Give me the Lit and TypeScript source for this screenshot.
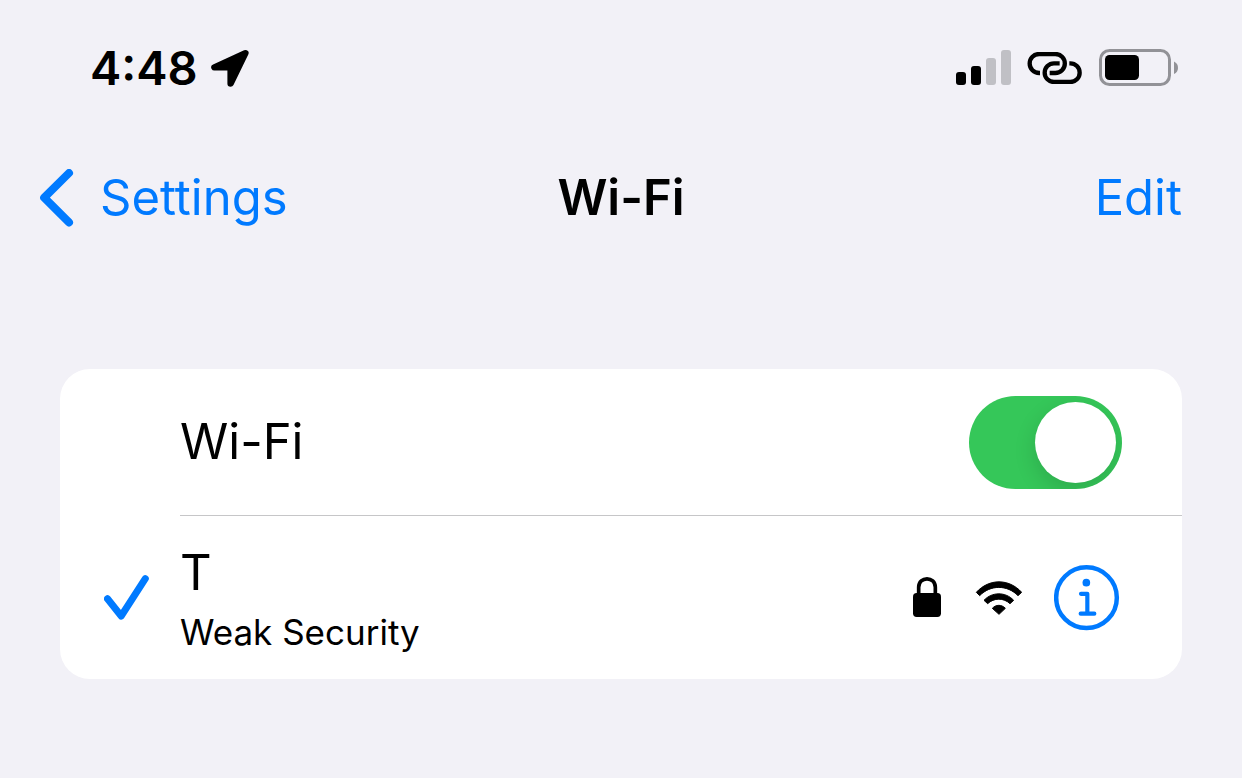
import { LitElement, css, html } from "lit";
import { customElement, state } from "lit/decorators.js";

@customElement("status-bar")
class StatusBar extends LitElement {
  static styles = css`
    :host {
      display: flex;
      align-items: center;
      justify-content: space-between;
      height: 136px;
      padding: 0 64px 0 90px;
    }
    .group {
      display: flex;
      align-items: center;
      gap: 16px;
    }
    .clock {
      display: flex;
      align-items: center;
      gap: 13px;
      font-size: 47px;
      line-height: 60px;
      font-weight: 600;
    }
    svg {
      display: block;
    }
  `;

  render() {
    return html`
      <div class="clock">
        <time>4:48</time>
        <svg width="38" height="38" viewBox="0 0 38 38" aria-hidden="true">
          <path d="M34.4 4.2 3.4 18.400H19.6V34.600Z" stroke="#000" stroke-width="6.4" stroke-linejoin="round" />
        </svg>
      </div>
      <div class="group">
        <svg width="55" height="36" viewBox="0 0 55 36" role="img" aria-label="Signal">
          <rect x="0" y="22" width="10" height="13" rx="3" />
          <rect x="15" y="16" width="10" height="19" rx="3" />
          <rect x="30" y="8" width="10" height="27" rx="3" fill="#c0c0c5" />
          <rect x="45" y="0" width="10" height="35" rx="3" fill="#c0c0c5" />
        </svg>
        <svg width="55" height="32" viewBox="262 51 165 96" role="img" aria-label="Hotspot">
          <g fill="none" stroke="#000" stroke-width="13">
            <path d="M301 114H298.500A28.500 28.500 0 0 1 298.500 57H347A28.500 28.500 0 0 1 347 114H330" />
            <path d="M360 85H343A28 28 0 0 0 343 141H392A28 28 0 0 0 392 85H389" />
          </g>
        </svg>
        <svg width="80" height="38" viewBox="0 0 80 38" role="img" aria-label="Battery">
          <rect x="2.500" y="1.500" width="69" height="34" rx="9" fill="none" stroke="#929297" stroke-width="3" />
          <rect x="7" y="6" width="34" height="25" rx="4.500" />
          <path d="M76 12.500c2.700 1.300 4 3.500 4 6.200s-1.300 5-4 6.300z" fill="#929297" />
        </svg>
      </div>
    `;
  }
}

@customElement("nav-bar")
class NavBar extends LitElement {
  static styles = css`
    :host {
      display: grid;
      grid-template-columns: 1fr auto 1fr;
      align-items: center;
      height: 124px;
      padding: 0 40px;
      font-size: 49px;
      line-height: 60px;
    }
    .link {
      color: #007aff;
      text-decoration: none;
    }
    .back {
      display: flex;
      align-items: center;
      gap: 26px;
      justify-self: start;
    }
    .title {
      margin: 0;
      font-size: inherit;
      font-weight: 600;
    }
    .edit {
      justify-self: end;
      padding: 0 20px;
      border: 0;
      background: none;
      font: inherit;
      cursor: pointer;
    }
    svg {
      display: block;
    }
  `;

  render() {
    return html`
      <a class="link back" href="#settings">
        <svg width="34" height="58" viewBox="0 0 34 58" aria-hidden="true">
          <path d="M29 4 4.200 28.700 29 53.400" fill="none" stroke="#007aff" stroke-width="8" stroke-linecap="round" stroke-linejoin="round" />
        </svg>
        <span>Settings</span>
      </a>
      <h1 class="title">Wi-Fi</h1>
      <button class="link edit" type="button">Edit</button>
    `;
  }
}

@customElement("app-root")
class AppRoot extends LitElement {
  @state() private enabled = true;

  static styles = css`
    :host {
      display: block;
      box-sizing: border-box;
      min-height: 100vh;
      background: #f2f1f7;
      color: #000;
      font-family: Inter, "Liberation Sans", sans-serif;
    }
    .content {
      padding: 109px 60px 60px;
    }
    .card {
      border-radius: 30px;
      background: #fff;
    }
    .row {
      display: grid;
      grid-template-columns: 120px 1fr;
      align-items: center;
    }
    .body {
      display: flex;
      align-items: center;
      justify-content: space-between;
      padding-right: 60px;
    }
    .toggle-row .body {
      height: 146px;
      border-bottom: 1px solid #c6c6c8;
    }
    .network-row .body {
      height: 163px;
    }
    .name {
      font-size: 49px;
      line-height: 64px;
    }
    .note {
      font-size: 35px;
      line-height: 44px;
    }
    .text {
      display: grid;
      gap: 5px;
    }
    .check {
      justify-self: center;
      padding-left: 14px;
    }
    .icons {
      display: flex;
      align-items: center;
      gap: 32px;
    }
    .info {
      padding: 0;
      border: 0;
      background: none;
      cursor: pointer;
    }
    svg {
      display: block;
    }
    .switch {
      appearance: none;
      display: flex;
      box-sizing: border-box;
      width: 153px;
      height: 93px;
      margin: 0;
      padding: 6px;
      border-radius: 47px;
      background: #e9e9ea;
      overflow: hidden;
      cursor: pointer;
    }
    .switch:checked {
      justify-content: flex-end;
      background: #35c759;
    }
    .switch::before {
      content: "";
      width: 81px;
      height: 81px;
      border-radius: 50%;
      background: #fff;
      box-shadow: 0 8px 22px rgba(0, 0, 0, 0.14);
    }
  `;

  private toggle(event: Event) {
    this.enabled = (event.target as HTMLInputElement).checked;
  }

  render() {
    return html`
      <status-bar></status-bar>
      <nav-bar></nav-bar>
      <main class="content">
        <section class="card">
          <div class="row toggle-row">
            <span></span>
            <div class="body">
              <label class="name" for="wifi">Wi-Fi</label>
              <input class="switch" id="wifi" type="checkbox" role="switch" .checked=${this.enabled} @change=${this.toggle} />
            </div>
          </div>
          <div class="row network-row">
            <svg class="check" width="46" height="46" viewBox="0 0 46 46" role="img" aria-label="Connected">
              <path d="M3.500 23.800 17.200 41 41.300 3.700" fill="none" stroke="#007aff" stroke-width="7" stroke-linecap="round" stroke-linejoin="round" />
            </svg>
            <div class="body">
              <div class="text">
                <span class="name">T</span>
                <span class="note">Weak Security</span>
              </div>
              <div class="icons">
                <svg width="30" height="42" viewBox="66 82 90 126" role="img" aria-label="Secured">
                  <rect x="69" y="130" width="84" height="72" rx="11" />
                  <path d="M86 134V113C86 79 136 79 136 113V134" fill="none" stroke="#000" stroke-width="11" />
                </svg>
                <svg width="48" height="36" viewBox="253 90 144 108" role="img" aria-label="Signal strength">
                  <g stroke="#000" stroke-width="3" stroke-linejoin="round">
                    <path d="M260 127C298 85 358 85 396 127L385 137C353 104 302 104 270 137Z" />
                    <path d="M283 151C307 125 348 125 372 151L361 161C342 143 313 143 294 161Z" />
                    <path d="M308 175C319 163 336 163 347 175L328 193Z" />
                  </g>
                </svg>
                <button class="info" type="button" aria-label="Network details">
                  <svg width="68" height="66" viewBox="492 44 204 198" aria-hidden="true">
                    <g fill="none" stroke="#007aff" stroke-linecap="round" stroke-linejoin="round">
                      <circle cx="589.500" cy="142" r="91" stroke-width="13.500" />
                      <path d="M573 130.500H592V190M572 190H613" stroke-width="12.500" />
                    </g>
                    <circle cx="589" cy="97" r="11.500" fill="#007aff" />
                  </svg>
                </button>
              </div>
            </div>
          </div>
        </section>
      </main>
    `;
  }
}
